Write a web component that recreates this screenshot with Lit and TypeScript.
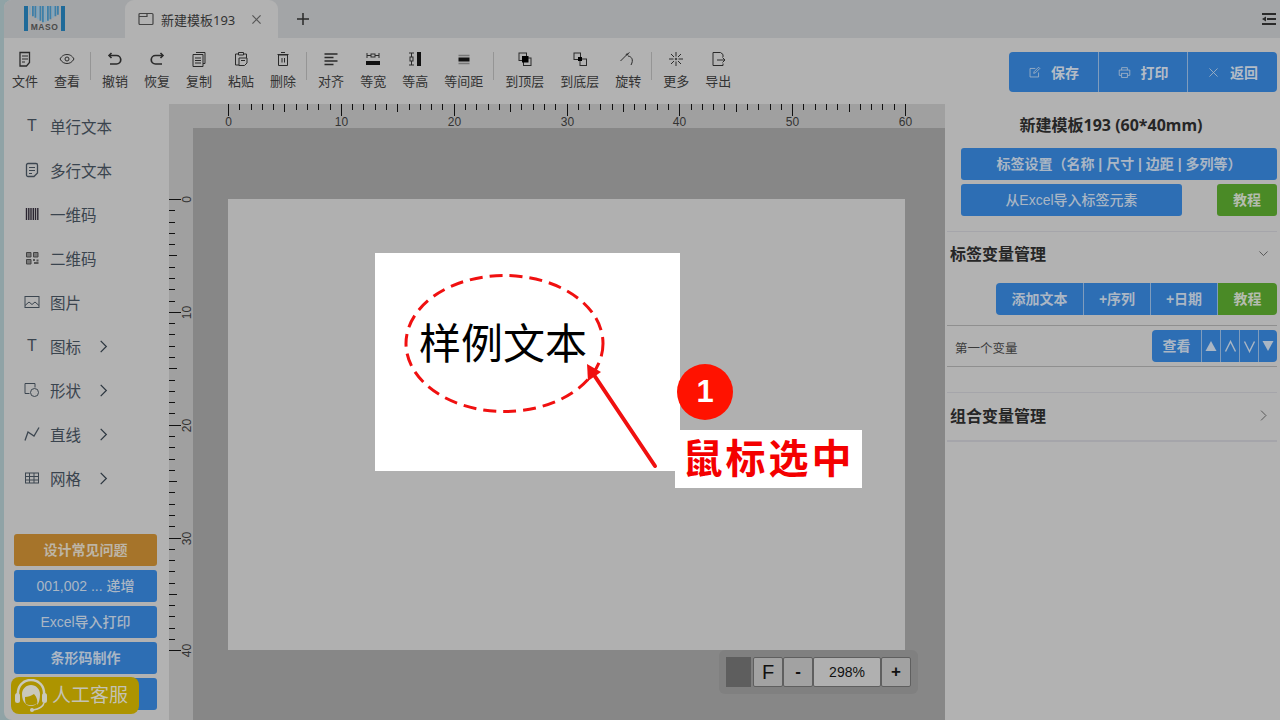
import { LitElement, html, css, svg } from 'lit'
import { customElement } from 'lit/decorators.js'

const UNIT = 677 / 60

const icons: Record<string, unknown> = {
  file: svg`<path d="M3 1.500h9.500v10l-3 3.500H3z" stroke-width="1.300"/><path d="M5 5h6M5 8h6M5 11h3"/>`,
  eye: svg`<path d="M1 8c2-3.500 4.500-4.500 7-4.500s5 1 7 4.500c-2 3.500-4.500 4.500-7 4.500S3 11.500 1 8z"/><circle cx="8" cy="8" r="2"/>`,
  undo: svg`<path d="M4.500 2 2 4.500 4.500 7" stroke-width="1.600"/><path d="M2 4.500h7.500a3.700 3.700 0 0 1 0 8.500H3" stroke-width="1.700"/>`,
  redo: svg`<path d="M11.500 2 14 4.500 11.500 7" stroke-width="1.600"/><path d="M14 4.500H6.500a3.700 3.700 0 0 0 0 8.500H13" stroke-width="1.700"/>`,
  copy: svg`<path d="M5 1.500h9v11h-2"/><path d="M2 3.500h10v12H2z"/><path d="M4 7h6M4 9.500h6M4 12h6"/>`,
  paste: svg`<path d="M5.500 1.500h5v2.500h-5z"/><path d="M5 3H2.500v11H6M11 3h2.500v4"/><path d="M6 7h8v5l-2.500 2.500H6z"/><path d="M8 9.500h4"/>`,
  trash: svg`<path d="M3.500 4h9v10.500h-9zM2.500 3.500h11M6 1.500h4"/><path d="M7 7v4.500M9.500 7v4.500"/>`,
  align: svg`<path d="M1.500 3h13M1.500 6.500h9M1.500 10h13M1.500 13.500h9" stroke-width="1.500"/>`,
  width: svg`<path d="M2 2v5M14 2v5M2 4.500h4M10 4.500h4" stroke-width="1"/><rect x="6" y="3" width="4" height="3"/><rect x="1" y="10" width="14" height="4" fill="#111" stroke="none"/>`,
  height: svg`<path d="M2 2h5M2 14h5M4.500 2v4M4.500 10v4" stroke-width="1"/><rect x="3" y="6" width="3" height="4"/><rect x="10" y="1" width="4" height="14" fill="#111" stroke="none"/>`,
  spacing: svg`<path d="M2.500 4.500h11M2.500 12.500h11" stroke="#777" stroke-width="1.500"/><rect x="2.500" y="6.500" width="11" height="4" fill="#111" stroke="none"/>`,
  top: svg`<rect x="6.500" y="7" width="7.500" height="7.500"/><rect x="2" y="2" width="7.500" height="7.500"/><rect x="5" y="5" width="6.500" height="6.500" fill="#000" stroke="none"/>`,
  bottom: svg`<rect x="2" y="2" width="6.500" height="6.500"/><rect x="8" y="8" width="6.500" height="6.500"/><rect x="6" y="6" width="4" height="4" fill="#000" stroke="none"/>`,
  rotate: svg`<path d="M.500 10 7 3.500l2.500-2"/><path d="M8 5c3.500.5 6 3.500 3 9"/><circle cx="7" cy="3.500" r=".7"/>`,
  more: svg`<path d="M8 1v4.500M8 10.500V15M1 8h4.500M10.500 8H15M3 3l3 3M13 3l-3 3M3 13l3-3M13 13l-3-3"/><circle cx="8" cy="8" r=".8"/>`,
  export: svg`<path d="M13 6V3.500L10.500 1.500H3v13h10v-2"/><path d="M7 9h8M12.500 6.500 15 9l-2.500 2.500"/>`,
  doc: svg`<path d="M2.500 3a1.500 1.500 0 0 1 1.500-1.500h8A1.500 1.500 0 0 1 13.500 3v8l-3.500 3.500H4A1.500 1.500 0 0 1 2.500 13z" stroke-width="1.300"/><path d="M5 5.500h6M5 8.500h6M5 11.500h3"/>`,
  barcode: svg`<path d="M2.500 2v12M4.800 2v12M7 2v12M9.300 2v12M11.500 2v12M13.800 2v12" stroke="#2a2430" stroke-width="1.400"/>`,
  qr: svg`<path d="M2.500 2.500h4.500v4.500H2.500zM9.500 2.500H14v4.500H9.500zM2.500 9.500h4.500V14H2.500z" stroke="#444" fill="#777"/><path d="M9 9h2v2H9zM12.500 9.500h2v2h-2zM10 12h4.500v2H10z" fill="#555" stroke="none"/>`,
  image: svg`<rect x="1" y="2.500" width="14" height="11"/><path d="M1 11.500 5 8l3 2.500L11 8l4 3.500"/>`,
  shape: svg`<path d="M5.500 11.500H1V1.500h10v4"/><circle cx="10.500" cy="10.500" r="4"/>`,
  line: svg`<path d="M1 14.500 4 6l6 4 5-8.500" stroke-width="1.300"/>`,
  grid: svg`<rect x="1.500" y="3" width="13" height="10"/><path d="M1.500 6.500h13M1.500 10h13M5.500 3v10M10 3v10"/>`,
  edit: svg`<path d="M13 8v5.500H2.500V3H9"/><path d="M7 9l.500-2L13 1.500l1.500 1.500L9 8.500z"/>`,
  print: svg`<path d="M4.500 5V2h7v3"/><path d="M4 11.500H1.500V5h13v6.500H12"/><rect x="4.500" y="9" width="7" height="5"/>`,
  close: svg`<path d="M3 3l10 10M13 3 3 13"/>`,
  chevron: svg`<path d="M5 2l6 6-6 6"/>`,
  chevronDown: svg`<path d="M3 5.500l5 5 5-5"/>`,
}

const icon = (name: string, size = 16) =>
  html`<svg class="ic" width=${size} height=${size} viewBox="0 0 16 16">${icons[name]}</svg>`

const tools: (string | [string, string])[] = [
  ['file', '文件'], ['eye', '查看'], '|',
  ['undo', '撤销'], ['redo', '恢复'], ['copy', '复制'], ['paste', '粘贴'], ['trash', '删除'], '|',
  ['align', '对齐'], ['width', '等宽'], ['height', '等高'], ['spacing', '等间距'], '|',
  ['top', '到顶层'], ['bottom', '到底层'], ['rotate', '旋转'], '|',
  ['more', '更多'], ['export', '导出'],
]

const navItems: [string, string, boolean][] = [
  ['T', '单行文本', false], ['doc', '多行文本', false], ['barcode', '一维码', false],
  ['qr', '二维码', false], ['image', '图片', false], ['T', '图标', true],
  ['shape', '形状', true], ['line', '直线', true], ['grid', '网格', true],
]

@customElement('app-root')
export class AppRoot extends LitElement {
  static styles = css`
    :host {
      display: block;
      position: relative;
      width: 1280px;
      height: 720px;
      overflow: hidden;
      background: #90a3a6;
      font-family: "Liberation Sans", "Noto Sans CJK SC", sans-serif;
      color: #2c2c2c;
    }
    .app {
      margin-left: 4px;
      height: 720px;
      display: flex;
      flex-direction: column;
      background: #b2b2b2;
      border-radius: 8px 0 0 8px;
      overflow: hidden;
    }
    .ic { fill: none; stroke: #2a2a2a; stroke-width: 1; display: block; flex: none; }

    .topbar { height: 38px; flex: none; display: flex; align-items: stretch; background: #a3a5a7; }
    .logo { width: 121px; flex: none; display: flex; align-items: flex-start; padding: 6px 0 0 20px; box-sizing: border-box; }
    .tab {
      position: relative;
      width: 153px;
      flex: none;
      display: flex;
      align-items: center;
      background: #b2b2b2;
      border-radius: 9px 9px 0 0;
      font-family: "Noto Sans", "Noto Sans CJK SC", sans-serif;
      font-size: 13px;
      color: #333;
      padding-left: 13px;
      box-sizing: border-box;
    }
    .tab .ic { margin-right: 7px; stroke: #444; stroke-width: 1.200; }
    .tab .x { margin-left: 15px; }
    .tab .x .ic { margin: 0; stroke-width: 1.500; stroke: #555; }
    .plus { margin-left: 18px; align-self: center; }
    .plus .ic { stroke-width: 1.500; }
    .menu { margin-left: auto; align-self: center; margin-right: 4px; }

    .toolbar { height: 66px; flex: none; display: flex; justify-content: space-between; }
    .tools { display: flex; align-items: flex-start; padding-top: 12px; }
    .tool { padding: 0 8px; display: flex; flex-direction: column; align-items: center; font-size: 13px; line-height: 18px; color: #333; }
    .tool .ic { margin-bottom: 5px; height: 18px; }
    .sep { width: 1px; height: 28px; margin: 2px 3px 0 2px; background: #959595; }
    .actions { display: flex; height: 40px; margin: 14px 3px 0 0; border-radius: 4px; overflow: hidden; }
    .actions div {
      width: 89px;
      display: flex;
      align-items: center;
      justify-content: center;
      gap: 10px;
      background: #2d6eb4;
      color: #b4bcc6;
      font-size: 14px;
      font-weight: 700;
      border-left: 1px solid #7f9cbd;
      box-sizing: border-box;
    }
    .actions div:first-child { border-left: 0; }
    .actions div:last-child { width: 90px; }
    .actions .ic { stroke: #a9b6c6; width: 13px; height: 13px; }

    .body { flex: 1; display: flex; min-height: 0; }
    .left { width: 165px; flex: none; display: flex; flex-direction: column; padding-top: 1px; box-sizing: border-box; }
    .nav { height: 44px; padding-bottom: 2px; box-sizing: border-box; display: flex; align-items: center; font-size: 15.500px; color: #3a444e; }
    .nav .slot { width: 16px; margin: 0 10px 0 20px; display: flex; justify-content: center; flex: none; }
    .nav .t { font-family: "Liberation Sans", sans-serif; font-size: 16px; line-height: 16px; color: #3a444e; }
    .nav .ic { stroke: #3c4650; }
    .nav .go { margin-left: 15px; }
    .nav .go .ic { stroke: #2c3640; stroke-width: 1.300; }
    .links { margin-top: auto; padding: 0 12px 10px 10px; display: flex; flex-direction: column; gap: 4px; }
    .btn {
      height: 32px;
      padding-bottom: 2px;
      display: flex;
      align-items: center;
      justify-content: center;
      border-radius: 3px;
      background: #2d6eb4;
      color: #aab6c4;
      font-size: 14px;
      box-sizing: border-box;
    }
    .btn.orange { background: #a6742a; color: #bdb5a6; font-weight: 700; }
    .btn.green { background: #4a8a26; color: #b4bcae; font-weight: 700; }
    .btn.strong { font-weight: 700; }
    .btn.medium { font-weight: 500; }

    .center { width: 776px; flex: none; display: flex; flex-direction: column; background: #a0a0a0; }
    .hruler, .vruler { display: block; flex: none; }
    .workspace { flex: 1; display: flex; min-height: 0; }
    .canvas { position: relative; flex: 1; background: #878787; padding: 71px 40px 0 35px; }
    .page { height: 451px; background: #b0b0b0; position: relative; }
    .label { position: absolute; left: 147px; top: 54px; width: 305px; height: 218px; background: #fff; display: flex; align-items: flex-start; }
    .sample { margin: 64px 0 0 44px; font-size: 42px; line-height: 48px; color: #000; font-family: "Noto Sans CJK SC", sans-serif; white-space: nowrap; }
    .zoom {
      position: absolute;
      left: 526px;
      top: 522px;
      width: 199px;
      height: 44px;
      padding: 7px;
      box-sizing: border-box;
      display: flex;
      background: #808080;
      border-radius: 6px;
    }
    .zoom div {
      height: 30px;
      box-sizing: border-box;
      display: flex;
      align-items: center;
      justify-content: center;
      border: 1px solid #5f5f5f;
      border-radius: 2px;
      background: #a2a2a2;
      color: #111;
      font-size: 15px;
    }
    .zoom .swatch { width: 25px; background: #5e5e5e; border: 0; border-radius: 0; margin-right: 2px; }
    .zoom .z { width: 30px; }
    .zoom .f { font-size: 20px; }
    .zoom .m { font-weight: 700; font-size: 17px; }
    .zoom .v { width: 68px; background: #b0b0b0; font-size: 14px; }

    .right { flex: 1; min-width: 0; padding-right: 3px; }
    .title { height: 42px; margin-bottom: 2px; padding-bottom: 2px; box-sizing: border-box; display: flex; align-items: center; justify-content: center; font: 700 16px "Noto Sans", "Noto Sans CJK SC", sans-serif; color: #262626; }
    .block { margin-left: 16px; display: flex; flex-direction: column; gap: 4px; }
    .rowb { display: flex; justify-content: space-between; }
    .rowb .btn:first-child { width: 221px; }
    .rowb .btn:last-child { width: 60px; }
    .section { margin: 15px 0 0 2px; border-top: 1px solid #a5a5aa; }
    .head { height: 44px; padding: 0 7px 2px 3px; box-sizing: border-box; display: flex; align-items: center; justify-content: space-between; font: 700 16px "Noto Sans CJK SC", sans-serif; color: #262626; }
    .head .ic { stroke: #444; }
    .group { display: flex; justify-content: flex-end; margin-top: 7px; }
    .group .btn { border-radius: 0; border-left: 1px solid #7f9cbd; font-weight: 700; }
    .group .btn:first-child { border-left: 0; border-radius: 4px 0 0 4px; }
    .group .btn:last-child { border-radius: 0 4px 4px 0; }
    .w87 { width: 87px; }
    .w67 { width: 67px; }
    .w60 { width: 60px; }
    .vars { margin-top: 10px; height: 42px; box-sizing: border-box; display: flex; justify-content: space-between; align-items: flex-start; border-top: 1px solid #8f8f8f; border-bottom: 1px solid #8f8f8f; padding: 4px 0 0 8px; font-size: 12.500px; color: #3a3a3a; }
    .vars .name { margin-top: 8px; }
    .vars .group { margin: 0; }
    .w49 { width: 49px; }
    .w19 { width: 19px; padding: 0; }
    .w19 .ic { stroke: #aab6c4; stroke-width: 1.400; }
    .w19 .solid { fill: #aab6c4; stroke: none; }
    .section2 { margin: 25px 0 0 2px; border-top: 1px solid #a5a5aa; border-bottom: 2px solid #a5a5aa; }
    .section2 .head { height: 47px; padding-bottom: 3px; }

    .marks { position: absolute; left: 0; top: 0; pointer-events: none; }
    .badge {
      position: absolute;
      left: 677px;
      top: 364px;
      width: 56px;
      height: 56px;
      border-radius: 50%;
      background: #ff1200;
      color: #fff;
      font: 700 31px "Liberation Sans", sans-serif;
      display: flex;
      align-items: center;
      justify-content: center;
    }
    .callout {
      position: absolute;
      left: 675px;
      top: 430px;
      width: 187px;
      height: 58px;
      padding-bottom: 7px;
      box-sizing: border-box;
      background: #fff;
      color: #f40000;
      font: 700 40px "Noto Sans CJK SC", sans-serif;
      letter-spacing: 3px;
      display: flex;
      align-items: center;
      justify-content: center;
      white-space: nowrap;
    }
    .service {
      position: absolute;
      left: 11px;
      top: 677px;
      width: 128px;
      height: 37px;
      padding: 0 0 4px 2px;
      border-radius: 8px;
      background: #ad9400;
      display: flex;
      align-items: center;
      color: #c4c2b4;
      font-size: 19px;
      box-sizing: border-box;
    }
    .service svg { flex: none; margin: 4px 3px 0 0; }
  `

  private hruler() {
    const ticks = []
    for (let i = 0; i <= 60; i++) {
      const x = Math.round(59 + i * UNIT) + 0.5
      const h = i % 10 === 0 ? 12 : i % 5 === 0 ? 8 : 6
      ticks.push(svg`<line x1=${x} x2=${x} y1="0" y2=${h} stroke="#111"/>`)
      if (i % 10 === 0) ticks.push(svg`<text x=${x} y="22" text-anchor="middle" font-size="12" fill="#333">${i}</text>`)
    }
    return html`<svg class="hruler" width="776" height="24">${ticks}</svg>`
  }

  private vruler() {
    const ticks = []
    for (let i = 0; i <= 40; i++) {
      const y = Math.round(71 + i * UNIT) + 0.5
      const w = i % 10 === 0 ? 12 : i % 5 === 0 ? 8 : 6
      ticks.push(svg`<line x1="0" x2=${w} y1=${y} y2=${y} stroke="#111"/>`)
      if (i % 10 === 0) ticks.push(svg`<text transform="translate(22 ${y}) rotate(-90)" text-anchor="middle" font-size="12" fill="#333">${i}</text>`)
    }
    return html`<svg class="vruler" width="24" height="592">${ticks}</svg>`
  }

  private logo() {
    const stripes = [5, 8, 10.500, 13, 15.500, 18, 20.500, 23, 25.500, 28, 30.500, 33]
    return html`<svg width="41" height="25" viewBox="0 0 41 25">
      <rect x="0" y="0" width="4" height="25" fill="#1f6a99"/>
      <rect x="37" y="0" width="4" height="25" fill="#1f6a99"/>
      ${stripes.map((x, i) => svg`<rect x=${x} y="0" width="1.800" height=${17 - Math.abs(i - 5.500) * 1.500} fill=${i % 3 === 0 ? '#7fa6bf' : '#3e7fa8'}/>`)}
      <text x="20.500" y="23.500" text-anchor="middle" font-size="8.500" font-weight="700" letter-spacing=".5" fill="#4a4a4a">MASO</text>
    </svg>`
  }

  render() {
    return html`
      <div class="app">
        <div class="topbar">
          <div class="logo">${this.logo()}</div>
          <div class="tab">
            <svg class="ic" width="16" height="16" viewBox="0 0 16 16"><rect x="1" y="2.500" width="14" height="11" rx="1"/><path d="M1 5.500h8V2.500"/></svg>
            <span>新建模板193</span>
            <span class="x">${icon('close', 13)}</span>
          </div>
          <div class="plus"><svg class="ic" width="14" height="14" viewBox="0 0 14 14"><path d="M7 1v12M1 7h12"/></svg></div>
          <div class="menu">
            <svg width="14" height="12" viewBox="0 0 14 12" style="display:block"><path d="M0 0h14v2H0zM5 5h9v2H5zM0 10h14v2H0zM4 3.500v5L0 6z" fill="#2a2a2a"/></svg>
          </div>
        </div>

        <div class="toolbar">
          <div class="tools">
            ${tools.map((t) =>
              t === '|'
                ? html`<span class="sep"></span>`
                : html`<div class="tool">${icon(t[0], 16)}<span>${t[1]}</span></div>`
            )}
          </div>
          <div class="actions">
            <div>${icon('edit')}保存</div>
            <div>${icon('print')}打印</div>
            <div>${icon('close')}返回</div>
          </div>
        </div>

        <div class="body">
          <div class="left">
            ${navItems.map(
              ([ic, text, more]) => html`
                <div class="nav">
                  <span class="slot">${ic === 'T' ? html`<span class="t">T</span>` : icon(ic)}</span>
                  <span>${text}</span>
                  ${more ? html`<span class="go">${icon('chevron', 15)}</span>` : ''}
                </div>
              `
            )}
            <div class="links">
              <div class="btn orange">设计常见问题</div>
              <div class="btn medium">001,002 ... 递增</div>
              <div class="btn medium">Excel导入打印</div>
              <div class="btn strong">条形码制作</div>
              <div class="btn"></div>
            </div>
          </div>

          <div class="center">
            ${this.hruler()}
            <div class="workspace">
              ${this.vruler()}
              <div class="canvas">
                <div class="page">
                  <div class="label"><div class="sample">样例文本</div></div>
                </div>
                <div class="zoom">
                  <div class="swatch"></div>
                  <div class="z f">F</div>
                  <div class="z m">-</div>
                  <div class="v">298%</div>
                  <div class="z m">+</div>
                </div>
              </div>
            </div>
          </div>

          <div class="right">
            <div class="title">新建模板193 (60*40mm)</div>
            <div class="block">
              <div class="btn strong">标签设置（名称 | 尺寸 | 边距 | 多列等）</div>
              <div class="rowb">
                <div class="btn medium">从Excel导入标签元素</div>
                <div class="btn green">教程</div>
              </div>
            </div>
            <div class="section">
              <div class="head">标签变量管理 ${icon('chevronDown', 13)}</div>
              <div class="group">
                <div class="btn w87">添加文本</div>
                <div class="btn w67">+序列</div>
                <div class="btn w67">+日期</div>
                <div class="btn green w60">教程</div>
              </div>
              <div class="vars">
                <span class="name">第一个变量</span>
                <div class="group">
                  <div class="btn w49">查看</div>
                  <div class="btn w19">
                    <svg class="ic" width="12" height="12" viewBox="0 0 12 12"><path class="solid" d="M6 1l5.500 10H.5z"/></svg>
                  </div>
                  <div class="btn w19">
                    <svg class="ic" width="13" height="13" viewBox="0 0 13 13"><path d="M1.500 11.500 6.500 1.500l5 10"/></svg>
                  </div>
                  <div class="btn w19">
                    <svg class="ic" width="13" height="13" viewBox="0 0 13 13"><path d="M1.500 1.500l5 10 5-10"/></svg>
                  </div>
                  <div class="btn w19">
                    <svg class="ic" width="12" height="12" viewBox="0 0 12 12"><path class="solid" d="M6 11 .5 1h11z"/></svg>
                  </div>
                </div>
              </div>
            </div>
            <div class="section2">
              <div class="head">组合变量管理 ${icon('chevron', 13)}</div>
            </div>
          </div>
        </div>
      </div>

      <svg class="marks" width="1280" height="720">
        <ellipse cx="504.500" cy="343.500" rx="98.500" ry="68" fill="none" stroke="#f01010" stroke-width="3" stroke-dasharray="13 7"/>
        <path d="M655 466 592 372" stroke="#f01010" stroke-width="4" stroke-linecap="round"/>
        <path d="M587 364 588 381 601 372z" fill="#f01010"/>
      </svg>
      <div class="badge">1</div>
      <div class="callout">鼠标选中</div>

      <div class="service">
        <svg width="36" height="34" viewBox="0 0 36 34">
          <path d="M5 17C4 7 10 1 18 1s14 6 13 16" fill="none" stroke="#c9c8bc" stroke-width="2.500"/>
          <rect x="2" y="14" width="5" height="10" rx="2.500" fill="#c9c8bc"/>
          <rect x="29" y="14" width="5" height="10" rx="2.500" fill="#c9c8bc"/>
          <path d="M9 15c0-5 4-9 9-9s9 4 9 9c0 5-1 9-3 11 1-4 0-8-3-11-3 2-6 3-9 3 0 3 0 5 1 7-3-2-4-6-4-10z" fill="#c9c8bc"/>
          <path d="M12 24c3 3 9 3 12 0-2 4-10 4-12 0z" fill="#c9c8bc"/>
          <path d="M31 24c-1 4-5 6-11 7" fill="none" stroke="#c9c8bc" stroke-width="1.500"/>
          <circle cx="19" cy="31" r="2" fill="#c9c8bc"/>
        </svg>
        <span>人工客服</span>
      </div>
    `
  }
}
